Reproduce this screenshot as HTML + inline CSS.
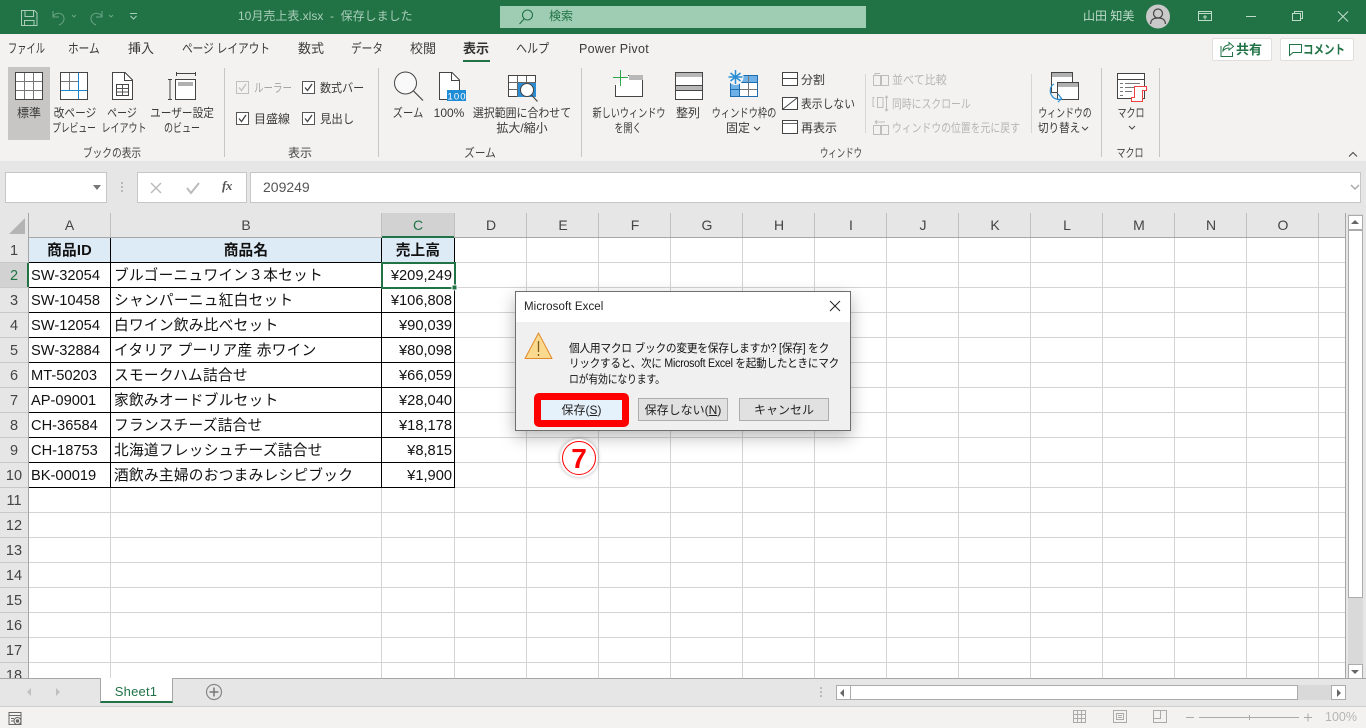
<!DOCTYPE html>
<html lang="ja"><head><meta charset="utf-8"><title>Excel</title>
<style>
html,body{margin:0;padding:0;width:1366px;height:728px;overflow:hidden;background:#fff}
body{position:relative;font-family:"Liberation Sans","Noto Sans CJK JP",sans-serif;font-size:12px;color:#3b3a39}
.b{position:absolute;box-sizing:border-box}
.t{position:absolute;white-space:nowrap;line-height:16px;font-size:12px;letter-spacing:0;transform-origin:0 50%}
.c{transform:translateX(-50%);transform-origin:50% 50%}
.tab{top:41px;font-size:13px;letter-spacing:0}
.g{color:#a6a6a6}
.lbl{top:145px;font-size:12px;color:#444}
.sep{position:absolute;width:1px;background:#c8c6c4}
.col{position:absolute;top:213px;height:24px;line-height:24px;text-align:center;font-size:14px;color:#444;width:72px}
.row{position:absolute;left:0;width:28px;text-align:center;font-size:14.5px;line-height:26px;height:24px;color:#444}
.cell{position:absolute;white-space:nowrap;font-size:14.67px;line-height:26px;height:24px;color:#111}
.j{left:114px;letter-spacing:.3px}
.a{left:31px}
.r{right:914px}
.h{font-weight:bold;text-align:center;letter-spacing:.2px}
.btn{position:absolute;box-sizing:border-box;background:#e1e1e1;border:1px solid #adadad;text-align:center;font-size:12px;line-height:20px;color:#222}
</style></head><body>

<!-- title bar -->
<div class="b" style="left:0;top:0;width:1366px;height:34px;background:#217346"></div>
<div class="t" style="left:238px;top:8px;color:#a9cdb9">10月売上表.xlsx&nbsp; - &nbsp;保存しました</div>
<div class="b" style="left:500px;top:6px;width:366px;height:22px;background:#9fcdb3"></div>
<div class="t" style="left:549px;top:8px;color:#217346">検索</div>
<div class="t" style="left:1083px;top:8px;color:#bfdccb">山田 知美</div>

<!-- ribbon bg -->
<div class="b" style="left:0;top:34px;width:1366px;height:127px;background:#f3f2f1"></div>
<div class="b" style="left:0;top:161px;width:1366px;height:52px;background:#e6e6e6"></div>
<div class="b" style="left:8px;top:67px;width:42px;height:73px;background:#c8c6c4"></div>

<!-- tabs -->
<div class="t tab" style="left:8px;transform:scaleX(.71)">ファイル</div>
<div class="t tab" style="left:68px;transform:scaleX(.82)">ホーム</div>
<div class="t tab" style="left:128px">挿入</div>
<div class="t tab" style="left:182px;transform:scaleX(.82)">ページ レイアウト</div>
<div class="t tab" style="left:298px">数式</div>
<div class="t tab" style="left:351px;transform:scaleX(.82)">データ</div>
<div class="t tab" style="left:410px">校閲</div>
<div class="t tab" style="left:463px;font-weight:bold;color:#333">表示</div>
<div class="b" style="left:463px;top:60px;width:27px;height:2px;background:#217346"></div>
<div class="t tab" style="left:516px;transform:scaleX(.85)">ヘルプ</div>
<div class="t tab" style="left:579px;font-size:12.5px;letter-spacing:.3px">Power Pivot</div>

<div class="b" style="left:1212px;top:38px;width:60px;height:23px;background:#fff;border:1px solid #e1dfdd;border-radius:2px"></div>
<div class="t" style="left:1236px;top:42px;font-weight:bold;color:#217346;font-size:13px">共有</div>
<div class="b" style="left:1280px;top:38px;width:74px;height:23px;background:#fff;border:1px solid #e1dfdd;border-radius:2px"></div>
<div class="t" style="left:1303px;top:42px;font-weight:bold;color:#217346;font-size:12.5px;transform:scaleX(.84)">コメント</div>

<!-- separators -->
<div class="sep" style="left:224px;top:68px;height:89px"></div>
<div class="sep" style="left:378px;top:68px;height:89px"></div>
<div class="sep" style="left:581px;top:68px;height:89px"></div>
<div class="sep" style="left:1101px;top:68px;height:89px"></div>
<div class="sep" style="left:1159px;top:68px;height:89px"></div>
<div class="sep" style="left:865px;top:74px;height:59px;background:#d8d6d4"></div>
<div class="sep" style="left:1031px;top:74px;height:59px;background:#d8d6d4"></div>

<!-- ribbon text -->
<div class="t c" style="left:29px;top:105px">標準</div>
<div class="t c" style="left:74.500px;top:105px;transform:translateX(-50%) scaleX(.89)">改ページ</div>
<div class="t c" style="left:74px;top:120px;transform:translateX(-50%) scaleX(.73)">プレビュー</div>
<div class="t c" style="left:122px;top:105px;transform:translateX(-50%) scaleX(.83)">ページ</div>
<div class="t c" style="left:123.500px;top:120px;transform:translateX(-50%) scaleX(.75)">レイアウト</div>
<div class="t c" style="left:182px;top:105px;transform:translateX(-50%) scaleX(.89)">ユーザー設定</div>
<div class="t c" style="left:182px;top:120px;transform:translateX(-50%) scaleX(.75)">のビュー</div>
<div class="t c lbl" style="left:112px;transform:translateX(-50%) scaleX(.81)">ブックの表示</div>

<div class="t g" style="left:254px;top:80px;transform:scaleX(.79)">ルーラー</div>
<div class="t" style="left:320px;top:80px;transform:scaleX(.92)">数式バー</div>
<div class="t" style="left:254px;top:111px">目盛線</div>
<div class="t" style="left:320px;top:111px;transform:scaleX(.95)">見出し</div>
<div class="t c lbl" style="left:300px">表示</div>

<div class="t c" style="left:408px;top:105px;transform:translateX(-50%) scaleX(.86)">ズーム</div>
<div class="t c" style="left:449px;top:105px">100%</div>
<div class="t c" style="left:522px;top:105px;transform:translateX(-50%) scaleX(.91)">選択範囲に合わせて</div>
<div class="t c" style="left:522px;top:120px">拡大/縮小</div>
<div class="t c lbl" style="left:480px;transform:translateX(-50%) scaleX(.89)">ズーム</div>

<div class="t c" style="left:628.500px;top:105px;transform:translateX(-50%) scaleX(.76)">新しいウィンドウ</div>
<div class="t c" style="left:628px;top:120px;transform:translateX(-50%) scaleX(.75)">を開く</div>
<div class="t c" style="left:688px;top:105px">整列</div>
<div class="t c" style="left:744px;top:105px;transform:translateX(-50%) scaleX(.77)">ウィンドウ枠の</div>
<div class="t" style="left:726px;top:120px">固定</div>
<div class="t" style="left:801px;top:72px">分割</div>
<div class="t" style="left:801px;top:96px;transform:scaleX(.9)">表示しない</div>
<div class="t" style="left:801px;top:120px">再表示</div>
<div class="t c lbl" style="left:841px;transform:translateX(-50%) scaleX(.7)">ウィンドウ</div>

<div class="t" style="left:892px;top:72px;color:#b5b5b5;transform:scaleX(.92)">並べて比較</div>
<div class="t" style="left:892px;top:96px;color:#b5b5b5;transform:scaleX(.82)">同時にスクロール</div>
<div class="t" style="left:892px;top:120px;color:#b5b5b5;transform:scaleX(.82)">ウィンドウの位置を元に戻す</div>

<div class="t c" style="left:1065px;top:105px;transform:translateX(-50%) scaleX(.74)">ウィンドウの</div>
<div class="t" style="left:1038px;top:120px;transform:scaleX(.88)">切り替え</div>
<div class="t c" style="left:1131px;top:105px;transform:translateX(-50%) scaleX(.75)">マクロ</div>
<div class="t c lbl" style="left:1130px;transform:translateX(-50%) scaleX(.75)">マクロ</div>

<!-- formula bar -->
<div class="b" style="left:5px;top:172px;width:102px;height:31px;background:#fff;border:1px solid #c6c6c6"></div>
<div class="b" style="left:137px;top:172px;width:110px;height:31px;background:#fff;border:1px solid #c6c6c6"></div>
<div class="b" style="left:250px;top:172px;width:1111px;height:31px;background:#fff;border:1px solid #c6c6c6"></div>
<div class="t" style="left:263px;top:179px;font-size:14px;color:#555">209249</div>
<div class="t" style="left:222px;top:178px;font-family:'Liberation Serif',serif;font-style:italic;font-weight:bold;font-size:13px;color:#555;letter-spacing:-.5px">fx</div>

<!-- sheet -->
<div class="b" style="left:0;top:213px;width:29px;height:465px;background:#e6e6e6"></div>
<div class="b" style="left:29px;top:213px;width:1317px;height:24px;background:#e6e6e6"></div>
<div class="b" style="left:382px;top:213px;width:72px;height:24px;background:#d2d2d2"></div>
<div class="b" style="left:0;top:263px;width:28px;height:24px;background:#d2d2d2"></div>
<div class="b" style="left:29px;top:238px;width:426px;height:24px;background:#ddebf7"></div>

<svg class="b" style="left:0;top:0" width="1366" height="728" viewBox="0 0 1366 728" fill="none">
 <!-- grey grid -->
 <g stroke="#d4d4d4" stroke-width="1" shape-rendering="crispEdges">
  <path d="M29 262.500H1345M29 287.500H1345M29 312.500H1345M29 337.500H1345M29 362.500H1345M29 387.500H1345M29 412.500H1345M29 437.500H1345M29 462.500H1345M29 487.500H1345M29 512.500H1345M29 537.500H1345M29 562.500H1345M29 587.500H1345M29 612.500H1345M29 637.500H1345M29 662.500H1345"/>
  <path d="M110.500 238V678M381.500 238V678M454.500 238V678M526.500 238V678M598.500 238V678M670.500 238V678M742.500 238V678M814.500 238V678M886.500 238V678M958.500 238V678M1030.500 238V678M1102.500 238V678M1174.500 238V678M1246.500 238V678M1318.500 238V678"/>
 </g>
 <!-- headers lines -->
 <g stroke="#b4b4b4" shape-rendering="crispEdges">
  <path d="M28.500 213V678M29 237.500H1345M1345.500 213V678" stroke="#a6a6a6"/>
  <path d="M110.500 213V237M381.500 213V237M454.500 213V237M526.500 213V237M598.500 213V237M670.500 213V237M742.500 213V237M814.500 213V237M886.500 213V237M958.500 213V237M1030.500 213V237M1102.500 213V237M1174.500 213V237M1246.500 213V237M1318.500 213V237" stroke="#c0c0c0"/>
  <path d="M0 262.500H28M0 287.500H28M0 312.500H28M0 337.500H28M0 362.500H28M0 387.500H28M0 412.500H28M0 437.500H28M0 462.500H28M0 487.500H28M0 512.500H28M0 537.500H28M0 562.500H28M0 587.500H28M0 612.500H28M0 637.500H28M0 662.500H28" stroke="#c8c8c8"/>
 </g>
 <!-- corner triangle -->
 <path d="M25 218V234H9Z" fill="#b4b4b4"/>
 <!-- black table -->
 <g stroke="#000" shape-rendering="crispEdges">
  <path d="M29 262.500H455M29 287.500H455M29 312.500H455M29 337.500H455M29 362.500H455M29 387.500H455M29 412.500H455M29 437.500H455M29 462.500H455M29 487.500H455"/>
  <path d="M110.500 238V488M381.500 238V488M454.500 238V488"/>
 </g>
 <!-- selection -->
 <g shape-rendering="crispEdges">
  <rect x="382" y="236" width="72" height="2" fill="#217346"/>
  <rect x="27" y="263" width="2" height="24" fill="#217346"/>
  <rect x="382" y="263" width="73" height="25" stroke="#217346" stroke-width="2"/>
  <rect x="452" y="285" width="5" height="5" fill="#217346" stroke="#fff"/>
 </g>

 <!-- title bar icons -->
 <g stroke="#a9cdb9" stroke-width="1">
  <path d="M21.500 10.500H34.500L37 13V25.500H21.500ZM25 10.500V16.500H33.500V10.500M24.500 25.500V20.500H34V25.500"/>
  <g opacity=".55"><path d="M53 11V17H59M53 16.500C56 12 63 12 64 18C64.500 21 62 24 59 25"/><path d="M72 15l2 2 2-2"/>
  <path d="M102 11V17H96M102 16.500C99 12 92 12 91 18C90.500 21 93 24 96 25"/><path d="M109 15l2 2 2-2"/></g>
  <path d="M130 13.500H137M130.500 16l3 3 3-3"/>
 </g>
 <g stroke="#217346" stroke-width="1.100">
  <circle cx="527.500" cy="15" r="5"/><path d="M524 19L519.500 24"/>
 </g>
 <circle cx="1158" cy="16.500" r="12" fill="#c9c9c9"/>
 <g stroke="#444" stroke-width="1.200"><circle cx="1158" cy="13.500" r="4.500"/><path d="M1150.500 24C1151 19 1154 18 1158 18S1165 19 1165.500 24"/></g>
 <g stroke="#bfdccb" stroke-width="1" shape-rendering="crispEdges">
  <path d="M1198.500 11.500H1211.500V20.500H1198.500ZM1198.500 13.500H1211.500M1205 19.500V15M1203 17H1207"/>
  <path d="M1246 16.500H1256"/>
  <path d="M1292.500 13.500H1300.500V20.500H1292.500ZM1294.500 13V11.500H1302.500V18.500H1301"/>
 </g>
 <path d="M1338 11.500L1348 21.500M1348 11.500L1338 21.500" stroke="#bfdccb"/>

 <!-- share/comment icons -->
 <path d="M1221.500 46.500H1221V56.500H1232.500V52M1223 51C1223 47 1226 45 1229 45V42.500L1233.500 46.500L1229 50V48C1226.500 48 1224.500 49 1223 51Z" stroke="#217346"/>
 <path d="M1289.500 44.500H1301.500V52.500H1293L1289.500 55.500Z" stroke="#217346"/>

 <!-- view: normal -->
 <g shape-rendering="crispEdges">
 <rect x="15.500" y="72.500" width="27" height="27" fill="#fff" stroke="#444"/>
 <path d="M24.500 73V99M33.500 73V99M16 81.500H42M16 90.500H42" stroke="#777"/>
 <!-- page break -->
 <rect x="60.500" y="72.500" width="27" height="27" fill="#fff" stroke="#444"/>
 <path d="M69.500 73V90M61 81.500H78" stroke="#777"/>
 <path d="M78.500 73V99M61 90.500H87" stroke="#1a86d0"/>
 <!-- custom view -->
 <path d="M176.500 72V76M195.500 72V76M176 73.500H196" stroke="#444"/>
 <rect x="175.500" y="79.500" width="20" height="20" fill="#fff" stroke="#444"/>
 <rect x="178" y="82" width="15" height="4" fill="#b0b0b0"/>
 <path d="M168 79.500H172M168 99.500H172M170 79.500V99.500" stroke="#444"/>
 <!-- layout inner -->
 <path d="M112.500 72.500H125L132.500 80V99.500H112.500Z" fill="#fff" stroke="#444"/>
 <path d="M124.500 72.500V80.500H132.500" stroke="#444"/>
 <rect x="116.500" y="84.500" width="12" height="11" stroke="#444"/>
 <path d="M116.500 88.500H128.500M116.500 92H128.500M122.500 84.500V95.500" stroke="#555"/>
 </g>

 <!-- checkboxes -->
 <g shape-rendering="crispEdges">
  <rect x="236.500" y="81.500" width="12" height="12" stroke="#c0c0c0" fill="#f3f2f1"/>
  <rect x="302.500" y="81.500" width="12" height="12" stroke="#555" fill="#fff"/>
  <rect x="236.500" y="112.500" width="12" height="12" stroke="#555" fill="#fff"/>
  <rect x="302.500" y="112.500" width="12" height="12" stroke="#555" fill="#fff"/>
 </g>
 <path d="M239 87.500L241.500 90.500L246 84" stroke="#c0c0c0" stroke-width="1.300"/>
 <path d="M305 87.500L307.500 90.500L312 84M239 118.500L241.500 121.500L246 115M305 118.500L307.500 121.500L312 115" stroke="#444" stroke-width="1.300"/>

 <!-- zoom -->
 <circle cx="405.500" cy="83" r="11" stroke="#444" fill="#f9f9f9"/>
 <path d="M413.500 91L423 100.500" stroke="#444" stroke-width="1.200"/>
 <path d="M439.500 72.500H452L459.500 80V99.500H439.500Z" fill="#fff" stroke="#444"/>
 <path d="M451.500 72.500V80.500H459.500" stroke="#444"/>
 <rect x="447" y="90" width="19" height="11" fill="#1f8dd6"/>
 <text x="447.500" y="99.500" font-family="Liberation Sans" font-size="9.500" fill="#fff" textLength="18">100</text>
 <!-- zoom to selection -->
 <g shape-rendering="crispEdges">
 <rect x="508.500" y="75.500" width="27" height="21" fill="#fff" stroke="#444"/>
 <rect x="517" y="82" width="19" height="15" fill="#2b8ed4"/>
 <path d="M517.500 76V97M526.500 76V82M509 82.500H536M509 89.500H517" stroke="#666"/>
 </g>
 <circle cx="527" cy="90" r="6.500" fill="#fff" stroke="#444"/>
 <path d="M531.500 95L537.500 101.500" stroke="#444" stroke-width="1.200"/>

 <!-- new window -->
 <g shape-rendering="crispEdges">
 <path d="M615.500 85V96.500H642.500V75.500H628" fill="#fff" stroke="#444"/>
 <rect x="629" y="75" width="14" height="5" fill="#b8b8b8"/>
 <path d="M613 77.500H628M620.500 70V86" stroke="#2ea44f" stroke-width="1.200"/>
 <!-- arrange -->
 <rect x="675.500" y="72.500" width="27" height="27" fill="#fff" stroke="#444"/>
 <rect x="676" y="73" width="26" height="4" fill="#b8b8b8"/>
 <rect x="676" y="86" width="26" height="4" fill="#b8b8b8"/>
 <path d="M675 85.500H703M675 90.500H703" stroke="#444"/>
 <!-- freeze -->
 <rect x="730.500" y="75.500" width="27" height="21" fill="#fff" stroke="#1c6cae"/>
 <rect x="731" y="76" width="26" height="6" fill="#6fb1e6"/>
 <rect x="731" y="82" width="8" height="14" fill="#6fb1e6"/>
 <path d="M739.500 76V96M748.500 76V96M731 82.500H757M731 89.500H757" stroke="#777"/>
 <path d="M739.500 76V96M731 82.500H757M731 89.500H739" stroke="#1c6cae"/>
 <!-- split etc -->
 <rect x="782.500" y="72.500" width="15" height="13" fill="#fff" stroke="#444"/>
 <path d="M783 78.500H797" stroke="#444"/>
 <rect x="782.500" y="97.500" width="15" height="12" fill="#fff" stroke="#444"/>
 <rect x="782.500" y="120.500" width="15" height="13" fill="#fff" stroke="#444"/>
 <path d="M783 123.500H797" stroke="#666"/>
 </g>
 <path d="M783 109L797 98" stroke="#444"/>
 <circle cx="735.500" cy="77" r="8" fill="#f3f2f1"/>
 <path d="M730.500 73L740.500 81M740.500 73L730.500 81M735.500 70V84M728.500 77H742.500" stroke="#2b8ed4" stroke-width="1.500"/>

 <!-- disabled -->
 <g stroke="#bdbdbd" fill="none">
  <path d="M873.500 75.500H880.500V85.500H873.500ZM881.500 75.500H888.500V85.500H881.500ZM875 76V73.500H880"/>
  <path d="M874.500 97.500H873V106.500H874.500M877.500 97.500H883V107.500H877.500ZM886.500 96V111M885 98L886.500 96L888 98M885 109L886.500 111L888 109"/>
  <path d="M873.500 125.500H880.500V134.500H873.500ZM881.500 125.500H888.500V134.500H881.500ZM875 122H885M875 122L877 120M875 122L877 124"/>
 </g>

 <!-- switch windows -->
 <g shape-rendering="crispEdges">
  <rect x="1051.500" y="72.500" width="21" height="20" fill="#fff" stroke="#444"/>
  <rect x="1052" y="73" width="20" height="4" fill="#b0b0b0"/>
  <rect x="1057.500" y="82.500" width="21" height="17" fill="#fff" stroke="#444"/>
  <rect x="1058" y="83" width="20" height="4" fill="#b0b0b0"/>
 </g>
 <path d="M1054 84C1050 86 1049 92 1052 96C1054 99 1058 100 1062 99M1058 94L1061.500 98.500L1058 102" stroke="#2b8ed4" stroke-width="1.200"/>
 <!-- macro -->
 <g shape-rendering="crispEdges">
  <rect x="1117.500" y="73.500" width="27" height="25" fill="#fff" stroke="#444"/>
  <path d="M1118 79.500H1144" stroke="#444"/>
  <path d="M1120 83.500H1123M1125 83.500H1140M1120 87.500H1123M1125 87.500H1136M1120 91.500H1123M1125 91.500H1132M1120 95.500H1123" stroke="#777"/>
  <path d="M1134.500 86.500H1146.500V90.500H1142.500V101.500H1131.500V97.500H1134.500Z" fill="#fff" stroke="#f04040"/>
 </g>

 <!-- chevrons -->
 <path d="M754 127l3 3 3-3M1082 127l3 3 3-3M1129 126l3 3 3-3M1349 156.500l4-4 4 4" stroke="#444"/>
 <!-- formula icons -->
 <path d="M93 185H101L97 190Z" fill="#777"/>
 <circle cx="122" cy="183" r="1" fill="#aaa"/><circle cx="122" cy="187" r="1" fill="#aaa"/><circle cx="122" cy="191" r="1" fill="#aaa"/>
 <path d="M151 183L161 193M161 183L151 193" stroke="#bbb" stroke-width="1.500"/>
 <path d="M187 188L191 193L199 183" stroke="#bbb" stroke-width="2"/>
 <path d="M1351 185l4 4 4-4" stroke="#aaa" stroke-width="1.500"/>
</svg>

<!-- column headers -->
<div class="col" style="left:29px;width:81px">A</div>
<div class="col" style="left:111px;width:270px">B</div>
<div class="col" style="left:382px;color:#217346">C</div>
<div class="col" style="left:455px">D</div>
<div class="col" style="left:527px">E</div>
<div class="col" style="left:599px">F</div>
<div class="col" style="left:671px">G</div>
<div class="col" style="left:743px">H</div>
<div class="col" style="left:815px">I</div>
<div class="col" style="left:887px">J</div>
<div class="col" style="left:959px">K</div>
<div class="col" style="left:1031px">L</div>
<div class="col" style="left:1103px">M</div>
<div class="col" style="left:1175px">N</div>
<div class="col" style="left:1247px">O</div>

<!-- row headers -->
<div class="row" style="top:238px">1</div>
<div class="row" style="top:263px;color:#217346">2</div>
<div class="row" style="top:288px">3</div>
<div class="row" style="top:313px">4</div>
<div class="row" style="top:338px">5</div>
<div class="row" style="top:363px">6</div>
<div class="row" style="top:388px">7</div>
<div class="row" style="top:413px">8</div>
<div class="row" style="top:438px">9</div>
<div class="row" style="top:463px">10</div>
<div class="row" style="top:488px">11</div>
<div class="row" style="top:513px">12</div>
<div class="row" style="top:538px">13</div>
<div class="row" style="top:563px">14</div>
<div class="row" style="top:588px">15</div>
<div class="row" style="top:613px">16</div>
<div class="row" style="top:638px">17</div>
<div class="row" style="top:663px">18</div>

<!-- cells -->
<div class="cell h" style="left:29px;width:81px;top:238px">商品ID</div>
<div class="cell h" style="left:111px;width:270px;top:238px">商品名</div>
<div class="cell h" style="left:382px;width:72px;top:238px">売上高</div>

<div class="cell a" style="top:263px">SW-32054</div><div class="cell j" style="top:263px">ブルゴーニュワイン３本セット</div><div class="cell r" style="top:263px">¥209,249</div>
<div class="cell a" style="top:288px">SW-10458</div><div class="cell j" style="top:288px">シャンパーニュ紅白セット</div><div class="cell r" style="top:288px">¥106,808</div>
<div class="cell a" style="top:313px">SW-12054</div><div class="cell j" style="top:313px">白ワイン飲み比べセット</div><div class="cell r" style="top:313px">¥90,039</div>
<div class="cell a" style="top:338px">SW-32884</div><div class="cell j" style="top:338px">イタリア プーリア産 赤ワイン</div><div class="cell r" style="top:338px">¥80,098</div>
<div class="cell a" style="top:363px">MT-50203</div><div class="cell j" style="top:363px">スモークハム詰合せ</div><div class="cell r" style="top:363px">¥66,059</div>
<div class="cell a" style="top:388px">AP-09001</div><div class="cell j" style="top:388px">家飲みオードブルセット</div><div class="cell r" style="top:388px">¥28,040</div>
<div class="cell a" style="top:413px">CH-36584</div><div class="cell j" style="top:413px">フランスチーズ詰合せ</div><div class="cell r" style="top:413px">¥18,178</div>
<div class="cell a" style="top:438px">CH-18753</div><div class="cell j" style="top:438px">北海道フレッシュチーズ詰合せ</div><div class="cell r" style="top:438px">¥8,815</div>
<div class="cell a" style="top:463px">BK-00019</div><div class="cell j" style="top:463px">酒飲み主婦のおつまみレシピブック</div><div class="cell r" style="top:463px">¥1,900</div>

<!-- vertical scrollbar -->
<div class="b" style="left:1346px;top:213px;width:20px;height:465px;background:#e6e6e6"></div>
<div class="b" style="left:1348px;top:214px;width:15px;height:464px;background:#d9d9d9"></div>
<div class="b" style="left:1348px;top:230px;width:15px;height:368px;background:#fff;border:1px solid #ababab"></div>
<div class="b" style="left:1348px;top:215px;width:15px;height:15px;background:#fff;border:1px solid #ababab"></div>
<div class="b" style="left:1348px;top:664px;width:15px;height:15px;background:#fff;border:1px solid #ababab"></div>
<div class="b" style="left:1351px;top:220px;width:0;height:0;border-left:4px solid transparent;border-right:4px solid transparent;border-bottom:4px solid #666"></div>
<div class="b" style="left:1351px;top:670px;width:0;height:0;border-left:4px solid transparent;border-right:4px solid transparent;border-top:4px solid #666"></div>

<!-- bottom -->
<div class="b" style="left:0;top:678px;width:1366px;height:28px;background:#e6e6e6;border-top:1px solid #a6a6a6"></div>
<div class="b" style="left:0;top:706px;width:1366px;height:22px;background:#f3f2f1;border-top:1px solid #cfcfcf"></div>
<div class="b" style="left:100px;top:678px;width:73px;height:25px;background:#fff;border-left:1px solid #a6a6a6;border-right:1px solid #a6a6a6;border-bottom:2px solid #217346"></div>
<div class="b" style="left:101px;top:678px;width:71px;height:1px;background:#fff"></div>
<div class="t c" style="left:136px;top:684px;font-size:13px;color:#217346;letter-spacing:.2px">Sheet1</div>
<svg class="b" style="left:0;top:0;pointer-events:none" width="1366" height="728" fill="none">
 <path d="M31 688l-4 4 4 4zM56 688l4 4-4 4z" fill="#c0c0c0"/>
 <circle cx="214" cy="692" r="7.500" stroke="#888" stroke-width="1.200"/>
 <path d="M209.500 692H218.500M214 687.500V696.500" stroke="#777" stroke-width="1.500"/>
 <circle cx="821" cy="688" r=".8" fill="#888"/><circle cx="821" cy="692" r=".8" fill="#888"/><circle cx="821" cy="696" r=".8" fill="#888"/>
 <g stroke="#666"><rect x="9" y="712.500" width="12" height="12" fill="#f3f2f1"/><path d="M9 715.500H21M11 718.500H14M11 721H14"/><circle cx="17.500" cy="721" r="3.500" fill="#f3f2f1"/><circle cx="17.500" cy="721" r="1.200" fill="#666"/></g>
 <g stroke="#aaa" shape-rendering="crispEdges">
  <path d="M1073.500 710.500H1085.500V722.500H1073.500ZM1077.500 711V722M1081.500 711V722M1074 714.500H1085M1074 718.500H1085"/>
  <path d="M1113.500 710.500H1126.500V722.500H1113.500ZM1116.500 713.500H1123.500V719.500H1116.500ZM1118 715.500H1122M1118 717.500H1122"/>
  <path d="M1153.500 710.500H1166.500V722.500H1153.500ZM1153.500 718.500H1160.500V710.500"/>
  <path d="M1186 717.500H1194M1199 717.500H1299M1249.500 715V720M1304 717.500H1312M1308 713.500V721.500"/>
 </g>
</svg>
<div class="t" style="left:1325px;top:709px;color:#b5b5b5;font-size:12.5px">100%</div>

<!-- horizontal scrollbar -->
<div class="b" style="left:836px;top:685px;width:510px;height:15px;background:#d9d9d9"></div>
<div class="b" style="left:836px;top:685px;width:15px;height:15px;background:#fff;border:1px solid #ababab"></div>
<div class="b" style="left:850px;top:685px;width:448px;height:15px;background:#fff;border:1px solid #ababab"></div>
<div class="b" style="left:1331px;top:685px;width:15px;height:15px;background:#fff;border:1px solid #ababab"></div>
<div class="b" style="left:840px;top:689px;width:0;height:0;border-top:4px solid transparent;border-bottom:4px solid transparent;border-right:4px solid #666"></div>
<div class="b" style="left:1337px;top:689px;width:0;height:0;border-top:4px solid transparent;border-bottom:4px solid transparent;border-left:4px solid #666"></div>

<!-- dialog -->
<div class="b" style="left:515px;top:291px;width:336px;height:140px;background:#f0f0f0;border:1px solid #6e6e6e;box-shadow:0 6px 16px rgba(0,0,0,.28)"></div>
<div class="b" style="left:516px;top:292px;width:334px;height:30px;background:#fff"></div>
<div class="t" style="left:524px;top:299px;font-size:11.5px;color:#222;letter-spacing:.1px">Microsoft Excel</div>
<svg class="b" style="left:515px;top:291px" width="336" height="140" fill="none">
 <path d="M315 10L325 20M325 10L315 20" stroke="#222" stroke-width="1"/>
 <path d="M23.500 42L10 67.500H37Z" fill="#fbd98f" stroke="#e08a2c" stroke-linejoin="round"/>
 <path d="M23.500 50V61M23.500 63V65" stroke="#7a5b20" stroke-width="1.300"/>
</svg>
<div class="t" style="left:569px;top:341px;font-size:11.500px;color:#111;letter-spacing:-.25px;transform:scaleX(.93)">個人用マクロ ブックの変更を保存しますか? [保存] をク</div>
<div class="t" style="left:569px;top:356px;font-size:11.500px;color:#111;letter-spacing:-.25px;transform:scaleX(.92)">リックすると、次に Microsoft Excel を起動したときにマク</div>
<div class="t" style="left:569px;top:372px;font-size:11.500px;color:#111;letter-spacing:-.25px;transform:scaleX(.86)">ロが有効になります。</div>
<div class="b" style="left:534px;top:393px;width:95px;height:34px;background:#f00;border-radius:5px"></div>
<div class="btn" style="left:541px;top:400px;width:81px;height:20px;background:#e5f1fb;border:none">保存(<u>S</u>)</div>
<div class="btn" style="left:638px;top:398px;width:90px;height:23px;line-height:22px">保存しない(<u>N</u>)</div>
<div class="btn" style="left:739px;top:398px;width:90px;height:23px;line-height:22px">キャンセル</div>

<!-- circled 7 -->
<div class="b" style="left:560px;top:439px;width:38px;height:38px;border-radius:50%;background:#fff;box-shadow:0 0 4px rgba(0,0,0,.3)"></div>
<div class="b" style="left:562px;top:441px;width:34px;height:34px;border-radius:50%;border:1px solid #f00"></div>
<div class="t c" style="left:579px;top:445px;font-size:28px;line-height:28px;font-weight:bold;color:#f00">7</div>

</body></html>
